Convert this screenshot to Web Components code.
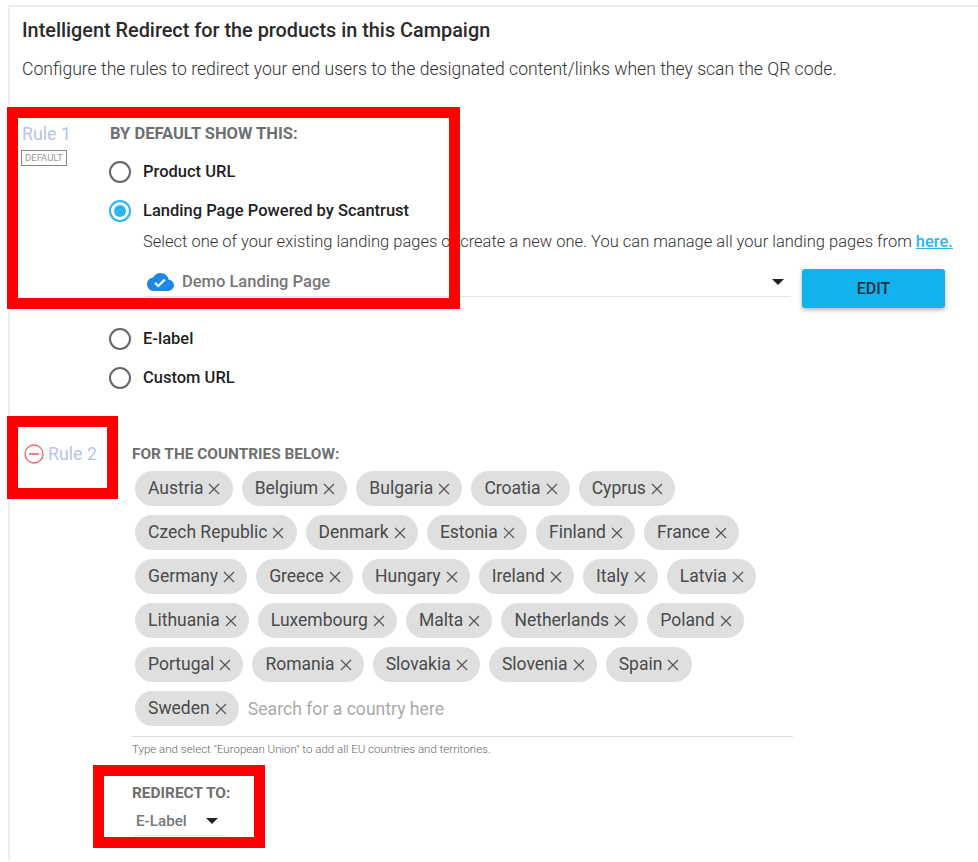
<!DOCTYPE html>
<html>
<head>
<meta charset="utf-8">
<title>Intelligent Redirect</title>
<style>
  html, body { margin: 0; padding: 0; background: #fff; }
  body { font-family: Roboto, "Liberation Sans", sans-serif; height: 862px; overflow: hidden; position: relative; }
</style>
</head>
<body>
<redirect-panel>
  <rule-block label="Rule 1" badge="DEFAULT" offset="88">
    <default-rule></default-rule>
  </rule-block>
  <rule-block label="Rule 2" removable offset="110" style="margin-top:47px">
    <country-rule></country-rule>
  </rule-block>
</redirect-panel>
<red-box style="left:7px;top:107px;width:453px;height:202px"></red-box>
<red-box style="left:7px;top:416px;width:111px;height:83px"></red-box>
<red-box style="left:93px;top:765px;width:172px;height:83px"></red-box>

<script>
class RedirectPanel extends HTMLElement {
  constructor() {
    super();
    this.attachShadow({ mode: 'open' });
    this.shadowRoot.innerHTML = `
      <style>
        :host { display: block; margin: 5px 0 0 8px; border-top: 2px solid #eee; border-left: 2px solid #eee; height: 855px; box-sizing: border-box; padding: 0 0 0 12px; }
        h1 { margin: 0; padding-top: 12px; font: 500 19.85px/24px Roboto, sans-serif; color: #2b2b2b; }
        p { margin: 14px 0 43px; font: 300 17.6px/24px Roboto, sans-serif; color: #333; white-space: nowrap; }
      </style>
      <h1>Intelligent Redirect for the products in this Campaign</h1>
      <p>Configure the rules to redirect your end users to the designated content/links when they scan the QR code.</p>
      <slot></slot>
    `;
  }
}

class RuleBlock extends HTMLElement {
  constructor() {
    super();
    this.attachShadow({ mode: 'open' });
    this.shadowRoot.innerHTML = `
      <style>
        :host { display: block; }
        .wrap { display: grid; }
        .name { font: 400 17.8px/20px Roboto, sans-serif; color: #b9c3ec; display: flex; align-items: center; gap: 4px; }
        .name svg { margin-left: 2px; }
        .badge { display: inline-block; margin: 6px 0 0 -1px; border: 1px solid #888; color: #999; font: 400 9.5px/14px Roboto, sans-serif; padding: 0 3px; }
      </style>
      <div class="wrap">
        <div class="side">
          <div class="name" id="name"></div>
          <span class="badge" id="badge"></span>
        </div>
        <div><slot></slot></div>
      </div>
    `;
  }

  connectedCallback() {
    const root = this.shadowRoot;
    root.querySelector('.wrap').style.gridTemplateColumns = this.getAttribute('offset') + 'px 1fr';
    let icon = '';
    if (this.hasAttribute('removable')) {
      icon = '<svg width="20" height="20" viewBox="0 0 20 20" fill="none" stroke="#f0606a" stroke-width="1.3"><circle cx="10" cy="10" r="9"/><path d="M5 10h10" stroke-width="1.6"/></svg>';
    }
    root.getElementById('name').innerHTML = icon + '<span>' + this.getAttribute('label') + '</span>';
    const badge = root.getElementById('badge');
    if (this.getAttribute('badge')) badge.textContent = this.getAttribute('badge');
    else badge.remove();
  }
}

class RadioOption extends HTMLElement {
  constructor() {
    super();
    this.attachShadow({ mode: 'open' });
    this.shadowRoot.innerHTML = `
      <style>
        :host { display: flex; align-items: center; gap: 12px; height: 39px; margin-left: -1px; font: 500 16.5px/20px Roboto, sans-serif; color: #1f1f1f; }
        .dot { width: 22px; height: 22px; box-sizing: border-box; border: 2px solid #666; border-radius: 50%; display: flex; align-items: center; justify-content: center; }
        :host([checked]) .dot { border-color: #29b6f0; }
        :host([checked]) .dot::after { content: ""; width: 12px; height: 12px; border-radius: 50%; background: #29b6f0; }
      </style>
      <span class="dot"></span><slot></slot>
    `;
  }
}

class SelectBox extends HTMLElement {
  constructor() {
    super();
    this.attachShadow({ mode: 'open' });
    this.shadowRoot.innerHTML = `
      <style>
        :host { display: flex; align-items: center; box-sizing: border-box; border-bottom: 1px solid #e2e2e2; font: 500 16.5px/20px Roboto, sans-serif; color: #777; }
        .text { flex: 1; display: flex; align-items: center; }
        .arrow { width: 0; height: 0; border-left: 6px solid transparent; border-right: 6px solid transparent; border-top: 6px solid #222; }
      </style>
      <span class="text"><slot></slot></span><span class="arrow"></span>
    `;
  }
}

class DefaultRule extends HTMLElement {
  constructor() {
    super();
    this.attachShadow({ mode: 'open' });
    this.shadowRoot.innerHTML = `
      <style>
        :host { display: block; }
        .title { font: 700 16.5px/20px Roboto, sans-serif; color: #6f6f6f; margin-bottom: 8px; }
        .desc { margin: 0 0 0 33px; font: 300 16.5px/24px Roboto, sans-serif; color: #333; white-space: nowrap; }
        a { color: #29b6f0; font-weight: 500; }
        .pick { display: flex; align-items: flex-start; margin: 15px 0 11px 35px; height: 39px; }
        select-box { width: 646px; height: 28px; padding: 0 7px 2px 2px; }
        svg { margin-right: 8px; }
        button { margin: 0 0 0 11px; width: 143px; height: 39px; border: 0; border-radius: 3px; background: #14b1ef; color: #26333d; font: 500 16px/37px Roboto, sans-serif; box-shadow: 0 2px 4px rgba(0,0,0,.3); }
      </style>
      <div class="title">BY DEFAULT SHOW THIS:</div>
      <radio-option>Product URL</radio-option>
      <radio-option checked>Landing Page Powered by Scantrust</radio-option>
      <div class="desc">Select one of your existing landing pages or create a new one. You can manage all your landing pages from <a href="#">here.</a></div>
      <div class="pick">
        <select-box>
          <svg width="27" height="20" viewBox="0 0 24 18" preserveAspectRatio="none"><path fill="#1e88e5" d="M19.35 7.04C18.67 3.59 15.64 1 12 1 9.11 1 6.6 2.64 5.35 5.04 2.34 5.36 0 7.91 0 11c0 3.31 2.69 6 6 6h13c2.76 0 5-2.24 5-5 0-2.64-2.05-4.78-4.65-4.96zM10 14l-3.5-3.5 1.41-1.41L10 11.17 15.18 6l1.41 1.41L10 14z"/></svg>
          Demo Landing Page
        </select-box>
        <button>EDIT</button>
      </div>
      <radio-option>E-label</radio-option>
      <radio-option>Custom URL</radio-option>
    `;
  }
}

class CountryChip extends HTMLElement {
  constructor() {
    super();
    this.attachShadow({ mode: 'open' });
    this.shadowRoot.innerHTML = `
      <style>
        :host { display: inline-flex; align-items: center; gap: 5px; height: 35px; box-sizing: border-box; padding: 0 12.2px 1px 13px; border-radius: 18px; background: #dfdfdf; font: 400 17.5px/20px Roboto, sans-serif; color: #4a4a4a; white-space: nowrap; }
        svg { margin-top: 1px; }
      </style>
      <slot></slot>
      <svg width="12" height="12" viewBox="0 0 12 12" stroke="#555" stroke-width="1.2" fill="none"><path d="M1 1l10 10M11 1L1 11"/></svg>
    `;
  }
}

const COUNTRIES = ['Austria', 'Belgium', 'Bulgaria', 'Croatia', 'Cyprus', 'Czech Republic', 'Denmark', 'Estonia',
  'Finland', 'France', 'Germany', 'Greece', 'Hungary', 'Ireland', 'Italy', 'Latvia', 'Lithuania', 'Luxembourg',
  'Malta', 'Netherlands', 'Poland', 'Portugal', 'Romania', 'Slovakia', 'Slovenia', 'Spain', 'Sweden'];

class CountryRule extends HTMLElement {
  constructor() {
    super();
    this.attachShadow({ mode: 'open' });
    const chips = COUNTRIES.map(c => `<country-chip>${c}</country-chip>`).join('');
    this.shadowRoot.innerHTML = `
      <style>
        :host { display: block; width: 661px; }
        .title { font: 700 15.4px/20px Roboto, sans-serif; color: #6f6f6f; }
        .chips { display: flex; flex-wrap: wrap; gap: 9px; padding: 7px 3px 10px; border-bottom: 1px solid #ddd; align-items: center; }
        .search { font: 400 17.6px/20px Roboto, sans-serif; color: #aaa; }
        .hint { font: 300 11.53px/14px Roboto, sans-serif; color: #666; margin-top: 5px; }
        .redirect { margin-top: 27px; }
        select-box { width: 91px; height: 24px; margin: 9px 0 0 2px; padding: 0 7px 5px 2px; font-size: 15.2px; }
      </style>
      <div class="title">FOR THE COUNTRIES BELOW:</div>
      <div class="chips">${chips}<span class="search">Search for a country here</span></div>
      <div class="hint">Type and select "European Union" to add all EU countries and territories.</div>
      <div class="redirect">
        <div class="title">REDIRECT TO:</div>
        <select-box>E-Label</select-box>
      </div>
    `;
  }
}

class RedBox extends HTMLElement {
  constructor() {
    super();
    this.attachShadow({ mode: 'open' });
    this.shadowRoot.innerHTML = `
      <style>
        :host { position: absolute; display: block; box-sizing: border-box; border: 11px solid #ff0000; }
      </style>
    `;
  }
}

customElements.define('redirect-panel', RedirectPanel);
customElements.define('rule-block', RuleBlock);
customElements.define('radio-option', RadioOption);
customElements.define('select-box', SelectBox);
customElements.define('default-rule', DefaultRule);
customElements.define('country-chip', CountryChip);
customElements.define('country-rule', CountryRule);
customElements.define('red-box', RedBox);
</script>
</body>
</html>
